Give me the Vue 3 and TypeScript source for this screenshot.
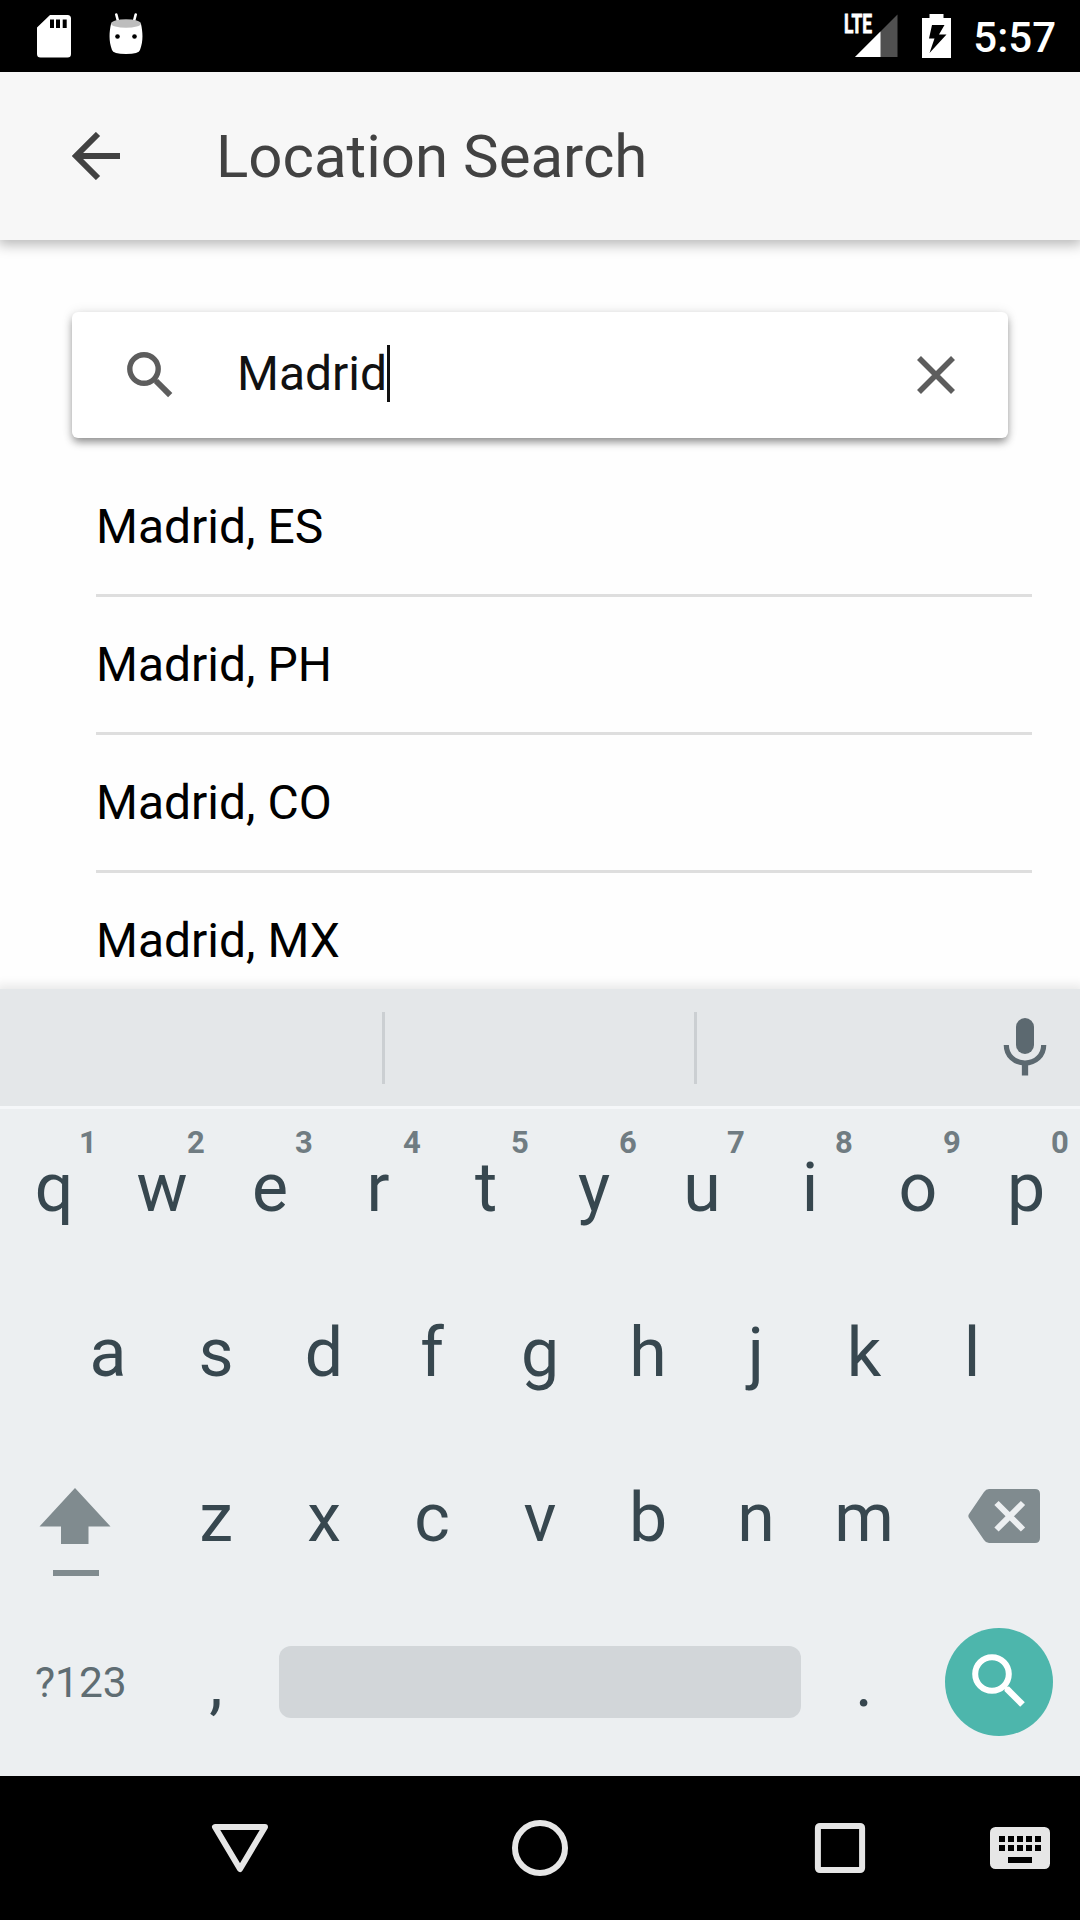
<script setup lang="ts">
interface HintedKey {
  letter: string
  hint: string
}

const query = 'Madrid'
const results: string[] = ['Madrid, ES', 'Madrid, PH', 'Madrid, CO', 'Madrid, MX']
const topRow: HintedKey[] = [...'qwertyuiop'].map((letter, i) => ({
  letter,
  hint: String((i + 1) % 10),
}))
const middleRow: string[] = [...'asdfghjkl']
const lowerRow: string[] = [...'zxcvbnm']
const keyDots: number[] = [9, 18, 27, 36, 45]
</script>

<template>
  <div class="phone">
    <header class="status">
      <svg class="sd" width="34" height="43" viewBox="0 0 34 43">
        <path fill="#fff" fill-rule="evenodd" d="M13 0H30.500Q34 0 34 3.500V39Q34 42.500 30.500 42.500H3.500Q0 42.500 0 39V12.500ZM13 4.500V13H17V4.500ZM19 4.500V13H23V4.500ZM25.700 4.500V13H29.700V4.500Z" />
      </svg>
      <svg class="robot" width="34" height="42" viewBox="0 0 34 42">
        <path d="M7.300 1.500 9.500 10M26.700 1.500 24.500 10" stroke="#fff" stroke-width="2.600" stroke-linecap="round" />
        <path fill="#fff" d="M2 11C0 20-.200 29 3 37Q4 41 17 41T31 37C34.200 29 34 20 32 11Z" />
        <ellipse cx="17" cy="10.500" rx="15" ry="4.300" fill="#bdbdbd" />
        <circle cx="8.500" cy="23.500" r="2.300" />
        <circle cx="25.500" cy="23.500" r="2.300" />
      </svg>
      <svg class="signal" width="54" height="44" viewBox="0 0 54 44">
        <path d="M53.500.5V43H11Z" fill="#505050" />
        <path d="M36.500 17.500V43H11Z" fill="#fff" />
        <text x="0" y="19.300" class="lte" textLength="28" lengthAdjust="spacingAndGlyphs">LTE</text>
      </svg>
      <svg class="battery" width="29" height="44" viewBox="0 0 29 44">
        <path fill="#fff" fill-rule="evenodd" d="M7.500 0H21.500V4H29V44H0V4H7.500ZM10 11 7 24.500H12.500L7.500 39 24.500 20.500H17L22.500 11Z" />
      </svg>
      <span class="clock">5:57</span>
    </header>

    <div class="appbar">
      <svg width="48" height="48" viewBox="0 0 48 48" fill="none" stroke="#424242" stroke-width="6">
        <path d="M48 24H5M26 2 4 24l22 22" />
      </svg>
      <h1>Location Search</h1>
    </div>

    <main class="content">
      <div class="card">
        <svg class="lens" width="46" height="46" viewBox="0 0 46 46" fill="none" stroke="#5d5d5d">
          <circle cx="17" cy="17" r="14.200" stroke-width="5.400" />
          <path d="M26.500 26.500 29.500 29.500" stroke-width="4" />
          <path d="M29 29 43.200 43.200" stroke-width="6" />
        </svg>
        <span class="query">{{ query }}</span><i class="caret"></i>
        <svg class="clear" width="38" height="38" viewBox="0 0 38 38">
          <path d="M2 2 36 36M36 2 2 36" stroke="#5d5d5d" stroke-width="5.600" />
        </svg>
      </div>
      <ul class="results">
        <li v-for="place in results" :key="place">{{ place }}</li>
      </ul>
    </main>

    <section class="keyboard">
      <div class="strip">
        <i></i><i></i>
        <svg width="44" height="58" viewBox="0 0 44 58">
          <rect x="13" y="0" width="18" height="36" rx="9" fill="#5c6970" />
          <path d="M3.300 27C3.300 37.500 11.500 45 22 45S40.700 37.500 40.700 27" fill="none" stroke="#5c6970" stroke-width="5.200" />
          <path d="M22 46V57.500" stroke="#5c6970" stroke-width="6.300" />
        </svg>
      </div>

      <div class="keys first">
        <span v-for="key in topRow" :key="key.letter" class="key">{{ key.letter }}<sup>{{ key.hint }}</sup></span>
      </div>
      <div class="keys">
        <span v-for="letter in middleRow" :key="letter" class="key">{{ letter }}</span>
      </div>
      <div class="keys">
        <span class="edge">
          <svg class="shift" width="72" height="88" viewBox="0 0 72 88" fill="#808b8f">
            <path d="M36 0 71.500 38.500H49.500V56H22V38.500H.500Z" />
            <path d="M14 82H60V88H14Z" />
          </svg>
        </span>
        <span v-for="letter in lowerRow" :key="letter" class="key">{{ letter }}</span>
        <span class="edge">
          <svg class="erase" width="72" height="54" viewBox="0 0 72 54">
            <path d="M21 0H67Q72 0 72 5V49Q72 54 67 54H21Q18 54 16 51L1 29Q-.300 27 1 25L16 3Q18 0 21 0Z" fill="#808b8f" />
            <path d="M28.500 14 55 40.500M55 14 28.500 40.500" stroke="#eceff1" stroke-width="6" />
          </svg>
        </span>
      </div>
      <div class="keys">
        <span class="edge symbols">?123</span>
        <span class="key">,</span>
        <span class="space"></span>
        <span class="key">.</span>
        <span class="edge">
          <span class="go">
            <svg width="54" height="54" viewBox="0 0 54 54" fill="none" stroke="#fff">
              <circle cx="20" cy="20" r="16.800" stroke-width="6" />
              <path d="M31 31 35 35" stroke-width="4" />
              <path d="M34.500 34.500 50.500 50.500" stroke-width="6.500" />
            </svg>
          </span>
        </span>
      </div>
    </section>

    <nav class="navbar">
      <svg width="60" height="60" viewBox="0 0 60 60"><path d="M5 9H55L30 51Z" /></svg>
      <svg width="60" height="60" viewBox="0 0 60 60"><circle cx="30" cy="30" r="25" /></svg>
      <svg width="60" height="60" viewBox="0 0 60 60"><rect x="7.900" y="7.900" width="44.200" height="44.200" rx="2" /></svg>
      <svg class="ime" width="60" height="42" viewBox="0 0 60 42">
        <rect width="60" height="42" rx="5.500" class="solid" />
        <g v-for="x in keyDots" :key="x" class="hole">
          <rect :x="x" y="9" width="6" height="6" />
          <rect :x="x" y="18" width="6" height="6" />
        </g>
        <rect x="18" y="30" width="24" height="6" class="hole" />
      </svg>
    </nav>
  </div>
</template>

<style>
body {
  background: #fff;
}
</style>

<style scoped>
.phone {
  width: 1080px;
  height: 1920px;
  display: flex;
  flex-direction: column;
  overflow: hidden;
  background: #fefefe;
  font-family: Roboto, sans-serif;
}
svg {
  display: block;
  flex: none;
}
.status {
  height: 72px;
  flex: none;
  box-sizing: border-box;
  padding: 0 24px 0 37px;
  background: #000;
  display: flex;
  align-items: center;
}
.robot {
  margin-left: 38px;
  margin-bottom: 5px;
}
.signal {
  margin-left: auto;
  overflow: visible;
}
.lte {
  font: 700 26px Roboto, sans-serif;
  fill: #fff;
  stroke: #fff;
  stroke-width: 0.8px;
}
.battery {
  margin-left: 24px;
}
.clock {
  margin-left: 22px;
  color: #fff;
  font-size: 42px;
  font-weight: 500;
  line-height: 48px;
  padding-top: 3px;
}
.appbar {
  height: 168px;
  flex: none;
  background: #f7f7f7;
  box-shadow: 0 3px 12px 2px rgba(0, 0, 0, 0.27);
  display: flex;
  align-items: center;
  padding-left: 72px;
}
h1 {
  margin: 0 0 0 96px;
  padding-top: 2px;
  color: #424242;
  font-size: 60px;
  font-weight: 400;
  line-height: 72px;
}
.content {
  height: 749px;
  flex: none;
  overflow: hidden;
}
.card {
  margin: 72px 72px 0;
  height: 126px;
  border-radius: 6px;
  background: #fff;
  box-shadow: 0 5px 9px -1px rgba(0, 0, 0, 0.42), 0 0 12px rgba(0, 0, 0, 0.1);
  display: flex;
  align-items: center;
}
.lens {
  margin-left: 55px;
}
.query {
  margin-left: 64px;
  color: #111;
  font-size: 48px;
  line-height: 56px;
  padding-bottom: 3px;
}
.caret {
  width: 3px;
  height: 57px;
  background: #111;
  margin-bottom: 3px;
}
.clear {
  margin: 0 53px 0 auto;
}
.results {
  list-style: none;
  margin: 21px 48px 0 96px;
  padding: 0;
}
.results li {
  height: 135px;
  line-height: 135px;
  border-bottom: 3px solid #dedede;
  font-size: 48px;
  color: #000;
}
.keyboard {
  height: 787px;
  flex: none;
  background: #eceff1;
  box-shadow: 0 0 10px 4px rgba(0, 0, 0, 0.09);
}
.strip {
  height: 117px;
  background: #e4e7e9;
  border-bottom: 3px solid #f5f7f9;
  display: flex;
  align-items: center;
  padding-right: 33px;
}
.strip i {
  width: 3px;
  height: 72px;
  background: #cbcfd2;
  margin-left: 309px;
}
.strip i:first-child {
  margin-left: 382px;
}
.strip svg {
  margin: 0 0 2px auto;
}
.keys {
  height: 165px;
  display: flex;
  justify-content: center;
  align-items: center;
  color: #37474f;
  font-size: 68px;
  line-height: 165px;
}
.keys.first {
  height: 162px;
  line-height: 162px;
  align-items: flex-start;
  margin-top: -2px;
  margin-bottom: 2px;
}
.key {
  width: 108px;
  flex: none;
  text-align: center;
  position: relative;
}
.key sup {
  position: absolute;
  left: 68px;
  width: 40px;
  top: 17px;
  color: #707c82;
  font-size: 31px;
  font-weight: 700;
  line-height: 38px;
}
.edge {
  width: 162px;
  flex: none;
  display: flex;
  line-height: normal;
}
.shift {
  margin: 27px 0 0 39px;
}
.erase {
  margin: -5px 0 0 50px;
}
.symbols {
  box-sizing: border-box;
  padding: 0 0 3px 35px;
  font-size: 42.5px;
  color: #5f6d73;
}
.space {
  width: 522px;
  height: 72px;
  margin: 0 9px 3px;
  border-radius: 12px;
  background: #d2d6d9;
}
.go {
  width: 108px;
  height: 108px;
  margin-left: 27px;
  margin-bottom: 3px;
  border-radius: 50%;
  background: #4db6ac;
  display: flex;
}
.go svg {
  margin: 26px 0 0 27px;
}
.navbar {
  height: 144px;
  flex: none;
  background: #000;
  display: flex;
  align-items: center;
  gap: 240px;
  padding-left: 210px;
  fill: none;
  stroke: #e6e6e6;
  stroke-width: 6;
  stroke-linejoin: round;
}
.ime {
  margin-left: -120px;
}
.solid {
  fill: #e6e6e6;
  stroke: none;
}
.hole {
  fill: #000;
  stroke: none;
}
</style>
